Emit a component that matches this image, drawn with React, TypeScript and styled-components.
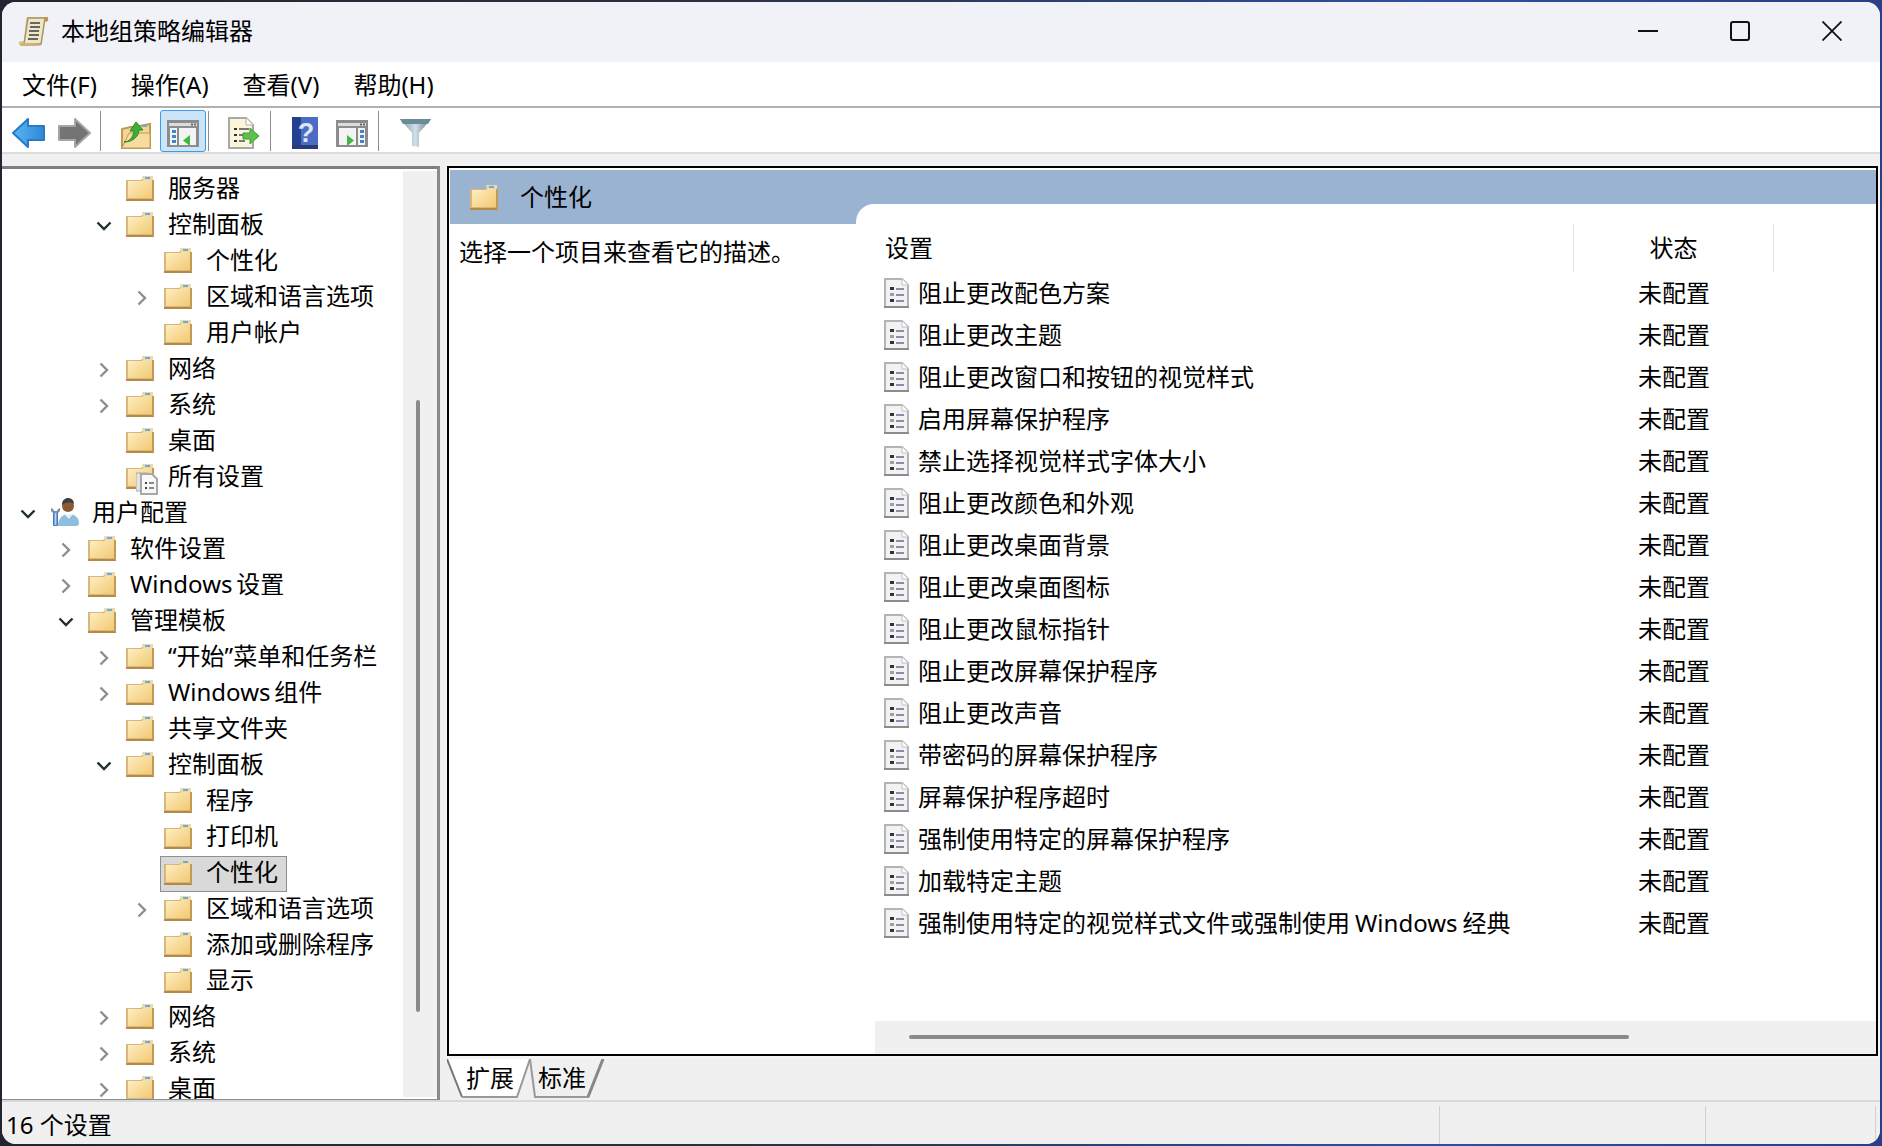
import React from "react";
import styled, { createGlobalStyle } from "styled-components";

const GlobalStyle = createGlobalStyle`
    html, body {
        margin: 0;
        padding: 0;
        width: 1882px;
        height: 1146px;
        overflow: hidden;
    }
    body {
        background: linear-gradient(90deg, #20252f 0%, #2a3242 40%, #2f4f9f 75%, #2b3f86 100%);
        font-family: "Noto Sans", "Noto Sans CJK SC", sans-serif;
        color: #000;
    }
`;

const Desk = styled.div`
    width: 1882px;
    height: 1146px;
    padding: 2px 2px 2px 2px;
    box-sizing: border-box;
`;

const Win = styled.div`
    width: 100%;
    height: 100%;
    display: flex;
    flex-direction: column;
    background: #f0f0f0;
    border-radius: 14px;
    overflow: hidden;
    font-size: 24px;
    line-height: 36px;
`;

const TitleBar = styled.div`
    height: 60px;
    flex: none;
    display: flex;
    align-items: center;
    background: #f0f2f8;
    padding: 0 2px 0 17px;
`;

const TitleText = styled.div`
    margin-left: 12px;
    flex: 1;
    margin-top: -2px;
`;

const WinButton = styled.div`
    width: 92px;
    height: 60px;
    padding-bottom: 2px;
    box-sizing: border-box;
    display: flex;
    align-items: center;
    justify-content: center;
`;

const MenuBar = styled.div`
    height: 42px;
    padding-top: 2px;
    flex: none;
    display: flex;
    align-items: center;
    gap: 34px;
    padding-left: 20px;
    background: #fff;
    border-bottom: 2px solid #b1b1b1;
`;

const ToolBar = styled.div`
    height: 42px;
    padding-top: 2px;
    flex: none;
    display: flex;
    align-items: center;
    background: #fff;
    border-bottom: 2px solid #dcdcdc;
    padding-left: 8px;
`;

const ToolDivider = styled.div<{ $l: number; $r: number }>`
    width: 1px;
    height: 40px;
    flex: none;
    background: #8c8c8c;
    margin-left: ${p => p.$l}px;
    margin-right: ${p => p.$r}px;
`;

const ToolButton = styled.div<{ $w: number; $ml?: number; $active?: boolean }>`
    width: ${p => p.$w}px;
    height: 42px;
    flex: none;
    margin-left: ${p => p.$ml ?? 0}px;
    padding-top: 4px;
    display: flex;
    align-items: center;
    justify-content: center;
    box-sizing: border-box;
    border-radius: 3px;
    border: 1px solid ${p => (p.$active ? "#3f9ae8" : "transparent")};
    background: ${p => (p.$active ? "#cce4f8" : "transparent")};
`;

const Body = styled.div`
    flex: 1;
    min-height: 0;
    display: flex;
    padding-top: 12px;
`;

const TreePane = styled.div`
    width: 438px;
    flex: none;
    height: 936px;
    box-sizing: border-box;
    border-top: 3px solid #7f7f7f;
    border-right: 3px solid #8a8a8a;
    border-bottom: 3px solid #8a8d94;
    background: #fff;
    display: flex;
    overflow: hidden;
`;

const TreeList = styled.div`
    flex: 1;
    min-width: 0;
    padding-top: 3px;
    overflow: hidden;
`;

const VScroll = styled.div`
    width: 34px;
    flex: none;
    background: #f0f0f0;
    margin: 2px 0 2px;
    position: relative;
`;

const VThumb = styled.div`
    position: absolute;
    left: 13px;
    top: 229px;
    width: 4px;
    height: 612px;
    border-radius: 2px;
    background: #8a8a8a;
`;

const TreeRow = styled.div<{ $depth: number }>`
    height: 36px;
    display: flex;
    align-items: center;
    padding-left: ${p => 16 + p.$depth * 38}px;
    white-space: nowrap;
    word-spacing: -2.5px;
`;

const Caret = styled.div`
    width: 20px;
    height: 36px;
    flex: none;
    display: flex;
    align-items: center;
    justify-content: center;
    margin-right: 12px;
`;

const IconSlot = styled.div`
    width: 30px;
    height: 36px;
    flex: none;
    display: flex;
    align-items: center;
    position: relative;
    top: -2px;
`;

const DocOverlay = styled.div`
    position: absolute;
    left: 10px;
    top: 13px;
    display: flex;
`;

const TreeLabel = styled.div`
    margin-left: 12px;
    position: relative;
    top: -2px;
`;

const SelectedBox = styled.div`
    display: flex;
    align-items: center;
    height: 36px;
    box-sizing: border-box;
    margin-left: -4px;
    padding: 0 8px 0 3px;
    background: #d9d9d9;
    border: 1px solid #8f8f8f;
`;

const RightPane = styled.div`
    width: 1433px;
    margin-left: 7px;
    flex: none;
    display: flex;
    flex-direction: column;
`;

const Frame = styled.div`
    height: 890px;
    width: 1431px;
    flex: none;
    box-sizing: border-box;
    border: 2px solid #000;
    outline: 2px solid #f4f4f4;
    background: #fff;
    display: flex;
    flex-direction: column;
    padding: 2px 0 0 1px;
    position: relative;
`;

const Band = styled.div`
    height: 34px;
    flex: none;
    background: #9ab3d1;
`;

const BandTab = styled.div`
    position: absolute;
    left: 1px;
    top: 2px;
    width: 430px;
    height: 54px;
    background: #9ab3d1;
    display: flex;
    align-items: center;
    padding-left: 20px;
    box-sizing: border-box;
    gap: 22px;
`;

const BandName = styled.div`
    margin-top: -1px;
`;

const Split = styled.div`
    flex: 1;
    display: flex;
    min-height: 0;
`;

const DescPane = styled.div`
    width: 406px;
    flex: none;
    padding: 30px 0 0 9px;
    box-sizing: border-box;
    white-space: nowrap;
    position: relative;
`;

const ListPane = styled.div`
    flex: 1;
    min-width: 0;
    display: flex;
    flex-direction: column;
    background: #fff;
    border-top-left-radius: 18px;
    position: relative;
    z-index: 1;
`;

const ListHead = styled.div`
    height: 48px;
    margin: 20px 0 0 19px;
    flex: none;
    display: flex;
    align-items: center;
`;

const HeadName = styled.div`
    width: 699px;
    height: 48px;
    box-sizing: border-box;
    padding-left: 10px;
    border-right: 1px solid #e4e4e4;
    line-height: 48px;
`;

const HeadState = styled.div`
    width: 200px;
    height: 48px;
    box-sizing: border-box;
    text-align: center;
    border-right: 1px solid #e4e4e4;
    line-height: 48px;
`;

const Rows = styled.div`
    flex: 1;
    margin-left: 19px;
`;

const Row = styled.div`
    height: 42px;
    display: flex;
    align-items: center;
    white-space: nowrap;
`;

const RowIcon = styled.div`
    width: 43px;
    flex: none;
    display: flex;
    justify-content: flex-end;
    padding-right: 9px;
    box-sizing: border-box;
`;

const RowName = styled.div`
    width: 720px;
    flex: none;
    margin-top: -1px;
    word-spacing: -1.2px;
`;

const RowState = styled.div`
    margin-top: -1px;
`;

const HScroll = styled.div`
    height: 33px;
    flex: none;
    margin-left: 19px;
    background: #f0f0f0;
    position: relative;
`;

const HThumb = styled.div`
    position: absolute;
    left: 34px;
    top: 14px;
    width: 720px;
    height: 4px;
    border-radius: 2px;
    background: #8a8a8a;
`;

const Tabs = styled.div`
    height: 40px;
    flex: none;
    position: relative;
    margin-top: 3px;
`;

const TabLabel = styled.div<{ $left: number }>`
    position: absolute;
    left: ${p => p.$left}px;
    top: 0;
    line-height: 38px;
`;

const StatusBar = styled.div`
    flex: none;
    height: 42px;
    border-top: 2px solid #d8d8d8;
    display: flex;
    background: #f0f0f0;
`;

const StatusCell = styled.div<{ $w?: number }>`
    width: ${p => (p.$w ? `${p.$w}px` : "auto")};
    flex: ${p => (p.$w ? "none" : 1)};
    margin-top: 4px;
    border-left: ${p => (p.$w ? "1px solid #d0d0d0" : "none")};
    padding-left: 4px;
    box-sizing: border-box;
    height: 38px;
    line-height: 38px;
`;

function FolderIcon() {
    const id = "fg" + React.useId();
    return (
        <svg width="28" height="26" viewBox="0 0 28 26">
            <defs>
                <linearGradient id={id} x1="0" y1="0" x2="1" y2="1">
                    <stop offset="0" stopColor="#fdf0c4" />
                    <stop offset="1" stopColor="#f3c873" />
                </linearGradient>
            </defs>
            <path d="M1 5h14l2-2V1h10v24H0V5z" fill="#d9b679" />
            <path d="M2 6h14l2-2h8v19H2z" fill={`url(#${id})`} />
            <path d="M16 1h11v4H17z" fill="#ecd9a8" />
            <rect x="19" y="2" width="5" height="2" fill="#6da9e0" />
            <path d="M0 24h28v2H0z" fill="#b58a45" />
            <path d="M26 5h2v20h-2z" fill="#c29a58" />
        </svg>
    );
}

function SettingsFolderIcon() {
    return (
        <IconSlot>
            <FolderIcon />
            <DocOverlay>
                <svg width="22" height="24" viewBox="0 0 22 24">
                    <path d="M0 2h12v18H0z" fill="#e4e4e4" stroke="#a8a8a8" />
                    <path d="M5 3h11l5 5v15H5z" fill="#f8f8f8" stroke="#a8a8a8" strokeWidth="2" />
                    <rect x="9" y="11" width="2" height="2" fill="#444" />
                    <rect x="13" y="11" width="5" height="2" fill="#8a8a8a" />
                    <rect x="9" y="16" width="2" height="2" fill="#444" />
                    <rect x="13" y="16" width="5" height="2" fill="#8a8a8a" />
                </svg>
            </DocOverlay>
        </IconSlot>
    );
}

function UserIcon() {
    return (
        <svg width="30" height="30" viewBox="0 0 30 30">
            <path d="M8 29c0-8 5-12 11-12s10 4 10 9c0 2-1 3-3 3z" fill="#8ebde0" />
            <path d="M14 17l5 5 4-5z" fill="#e8f2fa" />
            <circle cx="18" cy="9" r="6" fill="#8a5a34" />
            <path d="M12 8c0-5 3-7 6-7s6 2 6 6c-3-2-8-2-12 1z" fill="#3f3f3f" />
            <rect x="3" y="15" width="5" height="14" rx="1" fill="#3f78c0" />
            <rect x="4.5" y="16" width="2" height="12" fill="#b6d4ee" />
            <path d="M1 11v3l2 2h5l2-2v-3l-2 1-1 2H4l-1-2z" fill="#7e8c9c" />
        </svg>
    );
}

function DocIcon() {
    return (
        <svg width="25" height="30" viewBox="0 0 25 30">
            <path d="M1 1h17l6 6v22H1z" fill="#f2f2f2" stroke="#b4b4b4" strokeWidth="2" />
            <path d="M0 28h25v2H0z" fill="#8c8c8c" />
            <path d="M18 1v6h6" fill="#fff" stroke="#c0c0c0" />
            <rect x="6" y="9" width="4" height="3" fill="#2b3540" />
            <rect x="6" y="15" width="4" height="3" fill="#9aa0a8" />
            <rect x="6" y="21" width="4" height="3" fill="#2b3540" />
            <rect x="12" y="10" width="8" height="2" fill="#8f8ca8" />
            <rect x="12" y="16" width="8" height="2" fill="#8f8ca8" />
            <rect x="12" y="22" width="8" height="2" fill="#8f8ca8" />
        </svg>
    );
}

function ScrollIcon() {
    return (
        <svg width="30" height="32" viewBox="0 0 30 32">
            <path d="M7 3c0-2 2-2 3-2h17c2 0 3 2 2 4l-3 1-3 21c0 2-1 3-3 3H3c-2 0-3-1-3-3s1-2 3-2h2z" fill="#dccb9c" />
            <path d="M9 2h17l-4 26H5z" fill="#efe6c6" stroke="#a8956a" strokeWidth="1.5" />
            <path d="M11 7h10M11 11h10M10 15h10M10 19h10M9 23h10" stroke="#666" strokeWidth="2" />
            <path d="M0 27h18v3H2z" fill="#cdb47a" />
            <path d="M26 1h3v4l-3 1z" fill="#c09452" />
        </svg>
    );
}

function ArrowIcon({ dir }: { dir: "left" | "right" }) {
    const d = dir === "left" ? "M1 15L16 1v7h16v14H16v7z" : "M32 15L17 1v7H1v14h16v7z";
    return (
        <svg width="33" height="30" viewBox="0 0 33 30">
            <defs>
                <linearGradient id="backFill" x1="0" y1="0" x2="1" y2="0">
                    <stop offset="0" stopColor="#58b8f5" />
                    <stop offset="1" stopColor="#2f86d8" />
                </linearGradient>
            </defs>
            {dir === "left" ? (
                <path d={d} fill="url(#backFill)" stroke="#2a78c8" strokeWidth="2" strokeLinejoin="round" />
            ) : (
                <path d={d} fill="#747474" stroke="#a6a6a6" strokeWidth="2" strokeLinejoin="round" />
            )}
        </svg>
    );
}

function UpFolderIcon() {
    return (
        <svg width="30" height="34" viewBox="0 0 30 34">
            <path d="M1 13l9-2 3 0 16-3v24H1z" fill="#f4d592" stroke="#c09a58" strokeWidth="2" />
            <path d="M1 32l7-15h21v15z" fill="#f7dc9f" stroke="#c09a58" />
            <rect x="21" y="9" width="5" height="2" fill="#6da9e0" />
            <path d="M3 26c5 0 9-4 10-11h-4l6-9 7 8h-4c0 6-6 12-15 12z" fill="#3fae38" stroke="#2a8a2a" />
        </svg>
    );
}

function PaneIcon({ side }: { side: "left" | "right" }) {
    const listX = side === "left" ? 3 : 22;
    const mainX = side === "left" ? 12 : 3;
    const tri = side === "left" ? "M23 15v11l-7-5.5z" : "M11 15v11l7-5.5z";
    return (
        <svg width="32" height="27" viewBox="0 0 32 27">
            <rect x="0" y="0" width="32" height="27" fill="#8c8c8c" />
            <rect x="2" y="3" width="28" height="3" fill="#dcdcdc" />
            <rect x="24" y="3.5" width="2" height="2" fill="#666" />
            <rect x="27" y="3.5" width="2" height="2" fill="#666" />
            <rect x={listX} y="8" width="7" height="17" fill="#f4f4f4" />
            <rect x={listX + 2} y="10" width="4" height="3" fill="#3f86c8" />
            <rect x={listX + 2} y="15" width="4" height="3" fill="#3f86c8" />
            <rect x={listX + 2} y="20" width="4" height="3" fill="#3f86c8" />
            <rect x={mainX} y="8" width="17" height="17" fill="#f4f4f4" />
            <path d={tri} fill="#3fb83f" />
        </svg>
    );
}

function ExportIcon() {
    return (
        <svg width="32" height="32" viewBox="0 0 32 32">
            <path d="M1 1h17l7 7v23H1z" fill="#fbf6da" stroke="#a8a8a8" strokeWidth="2" />
            <path d="M18 1v7h7" fill="#fff" stroke="#b0b0b0" />
            <rect x="6" y="11" width="3" height="2" fill="#333" />
            <rect x="6" y="17" width="3" height="2" fill="#333" />
            <rect x="6" y="23" width="3" height="2" fill="#333" />
            <rect x="11" y="11" width="10" height="2" fill="#777" />
            <rect x="11" y="17" width="6" height="2" fill="#777" />
            <rect x="11" y="23" width="6" height="2" fill="#777" />
            <path d="M15 16h7v-5l9 8-9 8v-5h-7z" fill="#5ec24a" stroke="#3c9e3c" />
        </svg>
    );
}

function HelpIcon() {
    return (
        <svg width="26" height="32" viewBox="0 0 26 32">
            <rect width="26" height="32" fill="#4a6cc4" />
            <rect width="9" height="32" fill="#24408f" />
            <rect y="28" width="26" height="4" fill="#2a3c78" />
            <text x="14" y="25" textAnchor="middle" fontSize="27" fontWeight="700" fontFamily="Liberation Sans, sans-serif" fill="#dfe6f5">?</text>
        </svg>
    );
}

function FilterIcon() {
    return (
        <svg width="31" height="30" viewBox="0 0 31 30">
            <defs>
                <linearGradient id="fun" x1="0" y1="0" x2="1" y2="0">
                    <stop offset="0" stopColor="#7d9aa8" />
                    <stop offset="0.5" stopColor="#cfe0e6" />
                    <stop offset="1" stopColor="#5d7380" />
                </linearGradient>
            </defs>
            <path d="M0 1h31L19 15v14l-7-1V15z" fill="url(#fun)" />
            <path d="M0 1h31l-3 5H3z" fill="#6d8a98" />
        </svg>
    );
}

function Chevron({ open }: { open: boolean }) {
    if (open) {
        return (
            <svg width="16" height="10" viewBox="0 0 16 10">
                <path d="M1.5 1.5L8 8l6.5-6.5" fill="none" stroke="#22302f" strokeWidth="2.4" />
            </svg>
        );
    }
    return (
        <svg width="10" height="16" viewBox="0 0 10 16">
            <path d="M1.5 1.5L8 8l-6.5 6.5" fill="none" stroke="#8e8e8e" strokeWidth="2.4" />
        </svg>
    );
}

type Node = {
    depth: number;
    text: string;
    caret?: "open" | "closed";
    icon?: "user" | "settings";
    selected?: boolean;
};

const tree: Node[] = [
    { depth: 2, text: "服务器" },
    { depth: 2, text: "控制面板", caret: "open" },
    { depth: 3, text: "个性化" },
    { depth: 3, text: "区域和语言选项", caret: "closed" },
    { depth: 3, text: "用户帐户" },
    { depth: 2, text: "网络", caret: "closed" },
    { depth: 2, text: "系统", caret: "closed" },
    { depth: 2, text: "桌面" },
    { depth: 2, text: "所有设置", icon: "settings" },
    { depth: 0, text: "用户配置", caret: "open", icon: "user" },
    { depth: 1, text: "软件设置", caret: "closed" },
    { depth: 1, text: "Windows 设置", caret: "closed" },
    { depth: 1, text: "管理模板", caret: "open" },
    { depth: 2, text: "“开始”菜单和任务栏", caret: "closed" },
    { depth: 2, text: "Windows 组件", caret: "closed" },
    { depth: 2, text: "共享文件夹" },
    { depth: 2, text: "控制面板", caret: "open" },
    { depth: 3, text: "程序" },
    { depth: 3, text: "打印机" },
    { depth: 3, text: "个性化", selected: true },
    { depth: 3, text: "区域和语言选项", caret: "closed" },
    { depth: 3, text: "添加或删除程序" },
    { depth: 3, text: "显示" },
    { depth: 2, text: "网络", caret: "closed" },
    { depth: 2, text: "系统", caret: "closed" },
    { depth: 2, text: "桌面", caret: "closed" },
];

const settings = [
    "阻止更改配色方案",
    "阻止更改主题",
    "阻止更改窗口和按钮的视觉样式",
    "启用屏幕保护程序",
    "禁止选择视觉样式字体大小",
    "阻止更改颜色和外观",
    "阻止更改桌面背景",
    "阻止更改桌面图标",
    "阻止更改鼠标指针",
    "阻止更改屏幕保护程序",
    "阻止更改声音",
    "带密码的屏幕保护程序",
    "屏幕保护程序超时",
    "强制使用特定的屏幕保护程序",
    "加载特定主题",
    "强制使用特定的视觉样式文件或强制使用 Windows 经典",
];

function TreeItem({ node }: { node: Node }) {
    const icon =
        node.icon === "user" ? (
            <IconSlot><UserIcon /></IconSlot>
        ) : node.icon === "settings" ? (
            <SettingsFolderIcon />
        ) : (
            <IconSlot><FolderIcon /></IconSlot>
        );
    return (
        <TreeRow $depth={node.depth}>
            <Caret>{node.caret && <Chevron open={node.caret === "open"} />}</Caret>
            {node.selected ? (
                <SelectedBox>
                    {icon}
                    <TreeLabel>{node.text}</TreeLabel>
                </SelectedBox>
            ) : (
                <>
                    {icon}
                    <TreeLabel>{node.text}</TreeLabel>
                </>
            )}
        </TreeRow>
    );
}

export default function App() {
    return (
        <>
            <GlobalStyle />
            <Desk>
                <Win>
                    <TitleBar>
                        <ScrollIcon />
                        <TitleText>本地组策略编辑器</TitleText>
                        <WinButton>
                            <svg width="20" height="2" viewBox="0 0 20 2"><rect width="20" height="2" fill="#111" /></svg>
                        </WinButton>
                        <WinButton>
                            <svg width="20" height="20" viewBox="0 0 20 20"><rect x="1" y="1" width="18" height="18" rx="2" fill="none" stroke="#111" strokeWidth="2" /></svg>
                        </WinButton>
                        <WinButton>
                            <svg width="20" height="20" viewBox="0 0 20 20"><path d="M0.5 0.5l19 19M19.5 0.5l-19 19" stroke="#111" strokeWidth="1.8" /></svg>
                        </WinButton>
                    </TitleBar>
                    <MenuBar>
                        <span>文件(F)</span>
                        <span>操作(A)</span>
                        <span>查看(V)</span>
                        <span>帮助(H)</span>
                    </MenuBar>
                    <ToolBar>
                        <ToolButton $w={36}><ArrowIcon dir="left" /></ToolButton>
                        <ToolButton $w={36} $ml={10}><ArrowIcon dir="right" /></ToolButton>
                        <ToolDivider $l={8} $r={19} />
                        <ToolButton $w={32}><UpFolderIcon /></ToolButton>
                        <ToolButton $w={46} $ml={8} $active><PaneIcon side="left" /></ToolButton>
                        <ToolDivider $l={2} $r={15} />
                        <ToolButton $w={40}><ExportIcon /></ToolButton>
                        <ToolDivider $l={6} $r={19} />
                        <ToolButton $w={30}><HelpIcon /></ToolButton>
                        <ToolButton $w={40} $ml={12}><PaneIcon side="right" /></ToolButton>
                        <ToolDivider $l={6} $r={17} />
                        <ToolButton $w={38}><FilterIcon /></ToolButton>
                    </ToolBar>
                    <Body>
                        <TreePane>
                            <TreeList>
                                {tree.map((node, i) => (
                                    <TreeItem key={i} node={node} />
                                ))}
                            </TreeList>
                            <VScroll><VThumb /></VScroll>
                        </TreePane>
                        <RightPane>
                            <Frame>
                                <Band />
                                <BandTab>
                                    <FolderIcon />
                                    <BandName>个性化</BandName>
                                </BandTab>
                                <Split>
                                    <DescPane>选择一个项目来查看它的描述。</DescPane>
                                    <ListPane>
                                        <ListHead>
                                            <HeadName>设置</HeadName>
                                            <HeadState>状态</HeadState>
                                        </ListHead>
                                        <Rows>
                                            {settings.map(s => (
                                                <Row key={s}>
                                                    <RowIcon><DocIcon /></RowIcon>
                                                    <RowName>{s}</RowName>
                                                    <RowState>未配置</RowState>
                                                </Row>
                                            ))}
                                        </Rows>
                                        <HScroll><HThumb /></HScroll>
                                    </ListPane>
                                </Split>
                            </Frame>
                            <Tabs>
                                <svg width="160" height="40" viewBox="0 0 160 40">
                                    <path d="M0 0L15 38H70L83 0z" fill="#fff" />
                                    <path d="M0 0L15 38" fill="none" stroke="#777" strokeWidth="2" />
                                    <path d="M15 38H70L83 0" fill="none" stroke="#999" strokeWidth="2" />
                                    <path d="M83 0L88 38H141L156 0" fill="#f0f0f0" stroke="#999" strokeWidth="2" />
                                    <path d="M141 38L156 0" fill="none" stroke="#888" strokeWidth="3" />
                                </svg>
                                <TabLabel $left={19}>扩展</TabLabel>
                                <TabLabel $left={91}>标准</TabLabel>
                            </Tabs>
                        </RightPane>
                    </Body>
                    <StatusBar>
                        <StatusCell>16 个设置</StatusCell>
                        <StatusCell $w={266} />
                        <StatusCell $w={170} />
                        <StatusCell $w={5} />
                    </StatusBar>
                </Win>
            </Desk>
        </>
    );
}
